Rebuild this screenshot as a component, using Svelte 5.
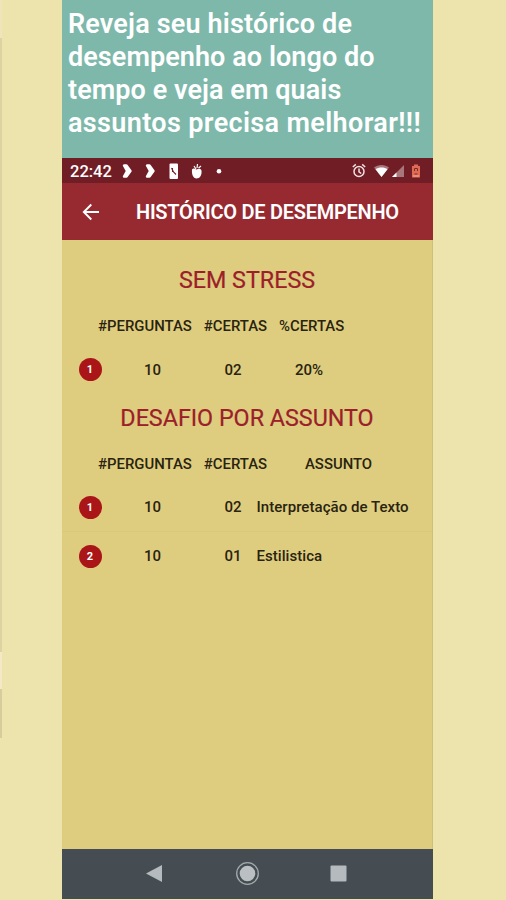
<script lang="ts">
	type Row = { perguntas: string; certas: string; extra: string };

	const chamada = [
		"Reveja seu histórico de",
		"desempenho ao longo do",
		"tempo e veja em quais",
		"assuntos precisa melhorar!!!",
	];

	const semStress: Row[] = [{ perguntas: "10", certas: "02", extra: "20%" }];

	const porAssunto: Row[] = [
		{ perguntas: "10", certas: "02", extra: "Interpretação de Texto" },
		{ perguntas: "10", certas: "01", extra: "Estilistica" },
	];
</script>

<main class="page">
	<div class="edge" aria-hidden="true"></div>
	<section class="promo">
		<h1 class="headline">
			{#each chamada as linha}
				<span class="line">{linha}</span>
			{/each}
		</h1>

		<div class="phone">
			<div class="status-bar">
				<span class="clock">22:42</span>
				<svg class="notifications" viewBox="0 0 104 20" fill="#fff">
					<path
						d="M4 4.500h2.500L10.500 10l-4 5.500H4L7 10zM27 4.500h2.500L33.500 10l-4 5.500H27L30 10z"
						stroke="#fff"
						stroke-width="2.400"
						stroke-linejoin="round"
					/>
					<rect x="49.500" y="2.500" width="8.500" height="15.500" rx="1" />
					<path d="M51.500 7l2 4 2.500 2.500M52.500 7v4" fill="none" stroke="#711d25" stroke-width="1.100" />
					<path d="M72 8.500c1.500-2 3-.500 4.500 0 2-1 4.500-1 5 1 .500 4.500-1.500 8-5 8s-5-4.500-4.500-9z" />
					<path d="M76 8l-2-3M77 7l.500-4M78.500 7l2.500-2" fill="none" stroke="#fff" stroke-width="1.200" />
					<circle cx="99" cy="10.300" r="2.300" />
				</svg>
				<svg class="system" viewBox="0 0 72 20">
					<g fill="none" stroke="#f2e1e2" stroke-width="1.500">
						<circle cx="7" cy="10.500" r="5" />
						<path d="M7 7.500v3.300l2.200 1.700M.800 6l3-2.600M10.200 3.400l3 2.600" />
					</g>
					<path d="M22 6.500c4-3.500 11-3.500 15 0L29.500 16z" fill="#a8777b" />
					<path d="M23.500 8.200c3-2.300 9-2.300 12 0L29.500 16z" fill="#fff" />
					<path d="M40 16L52 4v12z" fill="#a8777b" />
					<path d="M40 16l4.500-4.500V16z" fill="#fff" />
					<path d="M60 5h2V3.500h4V5h2v11.500h-8z" fill="#e06a53" />
					<path d="M62.500 10V7.500h3V10M62.500 13h3" fill="none" stroke="#792d2e" />
					<path d="M61 15h6" stroke="#f4b0a0" />
				</svg>
			</div>

			<header class="app-bar">
				<svg class="back" viewBox="0 0 18 18" fill="none" stroke="#fff" stroke-width="1.900">
					<path d="M17 9H2M9.300 1.500L1.800 9l7.500 7.500" />
				</svg>
				<h2>HISTÓRICO DE DESEMPENHO</h2>
			</header>

			<div class="content">
				<h3>SEM STRESS</h3>
				<div class="grid head">
					<span class="perguntas">#PERGUNTAS</span>
					<span class="certas">#CERTAS</span>
					<span class="percent">%CERTAS</span>
				</div>
				{#each semStress as row, i}
					<div class="grid row">
						<span class="badge">{i + 1}</span>
						<span class="perguntas">{row.perguntas}</span>
						<span class="certas">{row.certas}</span>
						<span class="percent">{row.extra}</span>
					</div>
				{/each}

				<h3 class="second">DESAFIO POR ASSUNTO</h3>
				<div class="grid head">
					<span class="perguntas">#PERGUNTAS</span>
					<span class="certas">#CERTAS</span>
					<span class="assunto">ASSUNTO</span>
				</div>
				{#each porAssunto as row, i}
					<div class="grid row subject">
						<span class="badge">{i + 1}</span>
						<span class="perguntas">{row.perguntas}</span>
						<span class="certas">{row.certas}</span>
						<span class="assunto">{row.extra}</span>
					</div>
				{/each}
			</div>

			<nav class="nav-bar">
				<svg viewBox="0 0 371 50">
					<path d="M84 24.500l16-8.500v17z" fill="#b4babd" />
					<circle cx="185.500" cy="24.500" r="10.800" fill="none" stroke="#a3abae" stroke-width="1.300" />
					<circle cx="185.500" cy="24.500" r="7.800" fill="#b9bfc2" />
					<rect x="268.500" y="16.500" width="16" height="16" rx="1" fill="#b4babd" />
				</svg>
			</nav>
		</div>
	</section>
</main>

<style>
	:global(body) {
		margin: 0;
		background: #ede4ad;
	}

	.page {
		display: grid;
		grid-template-columns: 62px 371px 1fr;
		height: 900px;
		overflow: hidden;
		background: #ede4ad;
		font-family: Roboto, sans-serif;
	}

	.edge {
		width: 2px;
		background: linear-gradient(
			#efe5bb 38px,
			#ddd3a2 38px 652px,
			#f3e9c6 652px 689px,
			#d6cc9c 689px 738px,
			#ede4ad 738px
		);
	}

	.promo {
		height: 899px;
		background: #7db8ab;
	}

	.headline {
		box-sizing: border-box;
		height: 158px;
		margin: 0;
		padding: 8px 0 0 6px;
		color: #fff;
		font-size: 27px;
		font-weight: 600;
		line-height: 33px;
	}

	.line {
		display: block;
		width: max-content;
		letter-spacing: 0.07px;
		white-space: nowrap;
	}

	.line:first-child {
		letter-spacing: 0.17px;
	}

	.line:last-child {
		letter-spacing: 0.36px;
	}

	.status-bar {
		display: flex;
		align-items: center;
		height: 25px;
		padding-left: 8px;
		background: #711d25;
		color: #fff;
	}

	.clock {
		width: 50px;
		padding-top: 1px;
		font-size: 16.5px;
		font-weight: 500;
	}

	.notifications {
		width: 104px;
		height: 20px;
	}

	.system {
		width: 72px;
		height: 20px;
		margin: 0 9px 0 auto;
	}

	.app-bar {
		display: flex;
		align-items: center;
		height: 57px;
		padding-left: 20px;
		background: #972a31;
		color: #fff;
	}

	.back {
		width: 18px;
		height: 18px;
	}

	h2 {
		margin: 1px 0 0 36px;
		font-size: 20px;
		font-weight: 600;
		letter-spacing: -0.27px;
		white-space: nowrap;
	}

	.content {
		box-sizing: border-box;
		height: 609px;
		padding-top: 20px;
		border-right: 1px solid #cfbf78;
		background: #dfcd7f;
		color: #29230f;
	}

	h3 {
		margin: 0;
		color: #9b2029;
		font-size: 23.3px;
		font-weight: 400;
		line-height: 40px;
		text-align: center;
		-webkit-text-stroke: 0.2px #9b2029;
	}

	.grid {
		display: grid;
		grid-template-columns: 36px 94px 87px 1fr;
		align-items: center;
		box-sizing: border-box;
		font-size: 15px;
		font-weight: 500;
		white-space: nowrap;
	}

	.head {
		height: 44px;
		padding-top: 8px;
		font-size: 14.9px;
	}

	.head .perguntas {
		grid-column: 2;
	}

	.row {
		height: 50px;
		padding-top: 1px;
	}

	.subject {
		height: 49px;
	}

	.subject + .subject {
		padding-top: 0;
		border-top: 1px solid #dac87c;
	}

	.row .perguntas,
	.certas {
		text-align: center;
	}

	.row .perguntas {
		padding-left: 15px;
	}

	.row .certas {
		padding-right: 5px;
	}

	.second {
		margin-top: 4px;
	}

	.row .percent {
		padding-left: 16px;
	}

	.head .assunto {
		padding-left: 26px;
	}

	.row .assunto {
		margin-left: -22.5px;
		letter-spacing: 0.05px;
	}

	.badge {
		width: 23px;
		height: 23px;
		margin-left: 16.5px;
		border-radius: 50%;
		background: #aa1518;
		color: #fff;
		font-size: 11px;
		font-weight: 700;
		line-height: 23px;
		text-align: center;
	}

	.nav-bar {
		height: 50px;
		background: #454d52;
	}

	.nav-bar svg {
		display: block;
		width: 371px;
		height: 50px;
	}
</style>
